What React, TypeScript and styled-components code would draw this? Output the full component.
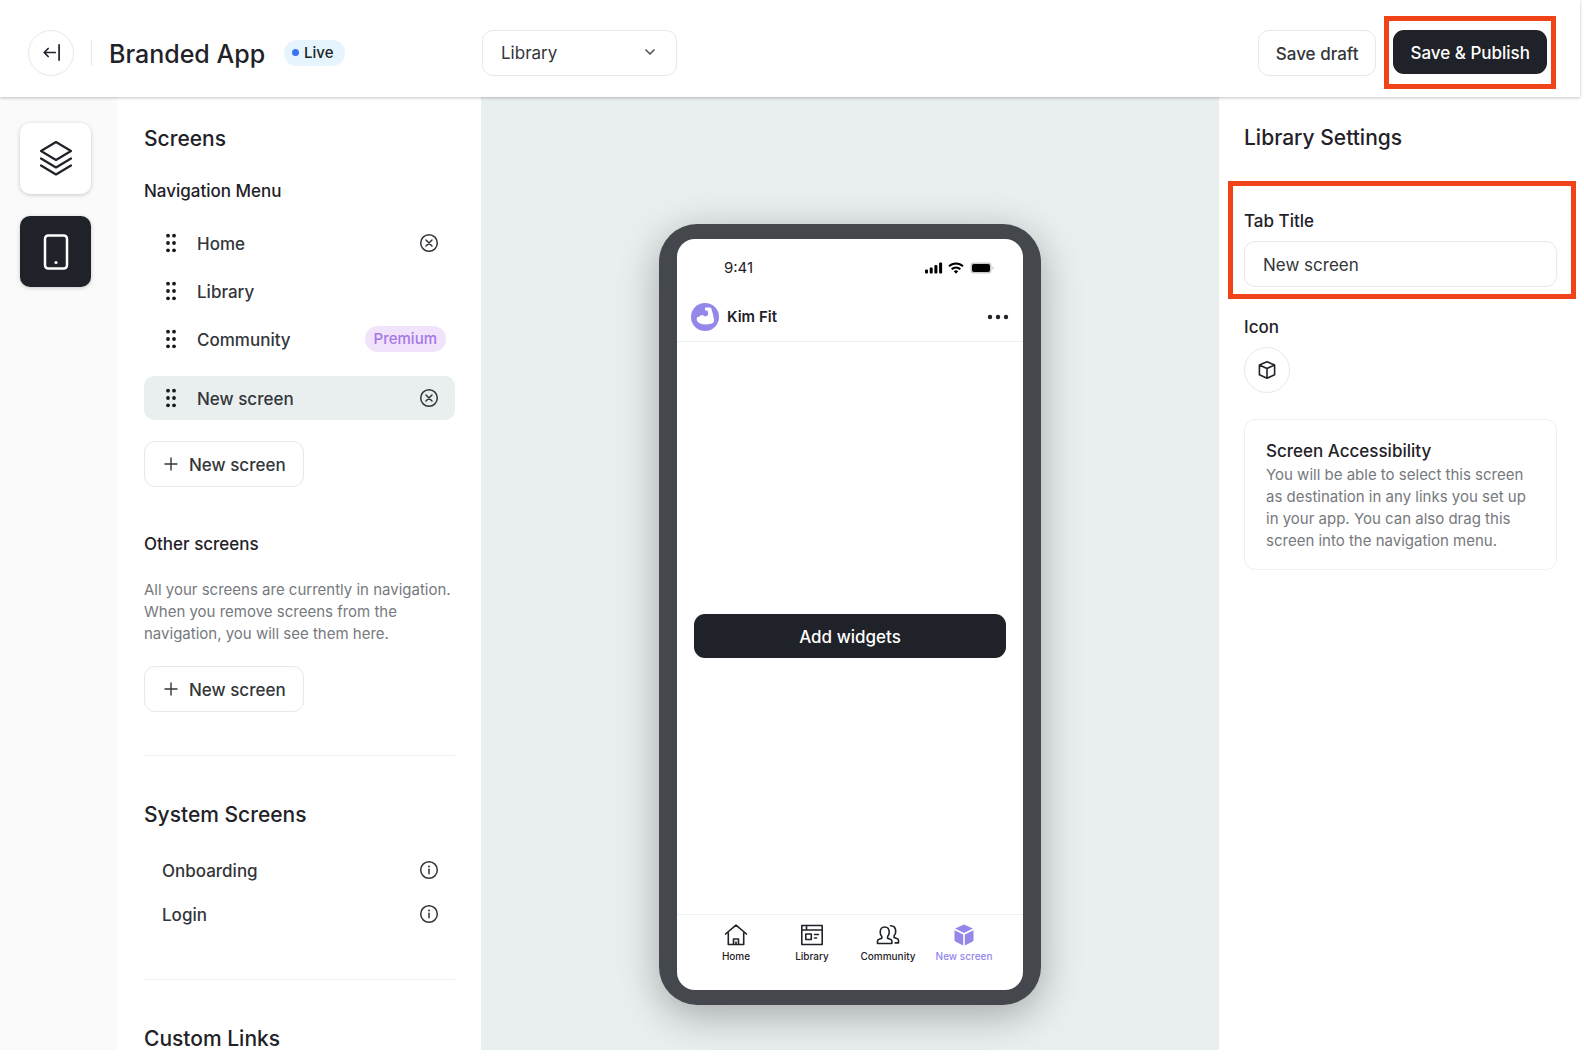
import React from "react";
import styled, { createGlobalStyle } from "styled-components";

const color = {
  ink: "#1f2228",
  text: "#33363a",
  muted: "#76797d",
  line: "#e6e8ea",
  canvas: "#e9eeef",
  dark: "#1f2228",
  purple: "#9388ea",
  alert: "#f0431a",
};

const GlobalStyle = createGlobalStyle`
  *, *::before, *::after { box-sizing: border-box; }
  body {
    margin: 0;
    background: #fff;
    color: ${color.ink};
    font-family: Inter, "Liberation Sans", sans-serif;
    font-size: 17px;
    line-height: 24px;
  }
  button, input, select { font: inherit; color: inherit; }
  button { cursor: pointer; }
  h1, h2, h3, p, ul { margin: 0; padding: 0; }
  svg { display: block; flex: none; }
`;

const Page = styled.div`
  display: grid;
  grid-template-rows: auto minmax(0, 1fr);
  height: 100vh;
  padding: 0 4px 8px 0;
`;

const Header = styled.header`
  z-index: 1;
  display: grid;
  grid-template-columns: 482px 1fr auto;
  align-items: center;
  padding: 16px 24px 8px 0;
  background: #fff;
  box-shadow: 0 1px 3px rgba(0, 0, 0, 0.24);
`;

const Brand = styled.div`
  display: flex;
  align-items: center;
  padding-left: 28px;
`;

const RoundButton = styled.button`
  display: grid;
  place-items: center;
  width: 46px;
  height: 46px;
  padding: 0;
  border: 1px solid ${color.line};
  border-radius: 50%;
  background: #fff;
`;

const VerticalRule = styled.span`
  width: 1px;
  height: 26px;
  margin: 0 17px;
  background: ${color.line};
`;

const Title = styled.h1`
  padding-top: 2px;
  font-size: 25px;
  line-height: 32px;
  font-weight: 500;
`;

const LiveBadge = styled.span`
  display: flex;
  align-items: center;
  gap: 5px;
  height: 26px;
  margin-left: 19px;
  padding: 0 11px 0 8px;
  border-radius: 13px;
  background: #e5f4fd;
  font-size: 15px;
  font-weight: 500;

  &::before {
    content: "";
    width: 7px;
    height: 7px;
    border-radius: 50%;
    background: #3b74f1;
  }
`;

const SelectBox = styled.div`
  position: relative;
  width: 195px;

  svg {
    position: absolute;
    top: 15px;
    right: 20px;
    color: #55585d;
    pointer-events: none;
  }
`;

const Select = styled.select`
  appearance: none;
  width: 100%;
  height: 46px;
  padding: 0 40px 0 18px;
  border: 1px solid ${color.line};
  border-radius: 11px;
  background: #fff;
  color: ${color.text};
`;

const HeaderActions = styled.div`
  display: flex;
  align-items: center;
  gap: 8px;
`;

const Button = styled.button<{ $solid?: boolean }>`
  display: inline-flex;
  align-items: center;
  justify-content: center;
  gap: 11px;
  height: ${(p) => (p.$solid ? 44 : 46)}px;
  padding: 2px 17px 0;
  border: ${(p) => (p.$solid ? "0" : `1px solid ${color.line}`)};
  border-radius: 11px;
  background: ${(p) => (p.$solid ? color.dark : "#fff")};
  color: ${(p) => (p.$solid ? "#fff" : color.text)};
  font-weight: 500;
  white-space: nowrap;
`;

const PublishFrame = styled.div`
  padding: 9px 4px 10px;
  border: 5px solid ${color.alert};

  button { display: flex; }
`;

const Workspace = styled.div`
  display: grid;
  grid-template-columns: 117px 364px minmax(0, 1fr) 361px;
  overflow: hidden;
`;

const Rail = styled.nav`
  display: flex;
  flex-direction: column;
  gap: 22px;
  padding: 26px 20px;
  background: #fafafa;
`;

const RailButton = styled.button<{ $active?: boolean }>`
  display: grid;
  place-items: center;
  width: 71px;
  height: 71px;
  padding: 0;
  border: 0;
  border-radius: 10px;
  background: ${(p) => (p.$active ? color.dark : "#fff")};
  color: ${(p) => (p.$active ? "#fff" : color.ink)};
  box-shadow: 0 1px 4px rgba(0, 0, 0, 0.2);
`;

const Sidebar = styled.aside`
  padding: 0 26px 0 27px;
  overflow: hidden;
`;

const Section = styled.section`
  padding: 28px 0 43px;
  border-bottom: 1px solid #eff0f1;

  & + & { padding-top: 45px; }
  &:last-child { border-bottom: 0; }
`;

const Heading = styled.h2`
  font-size: 21px;
  line-height: 28px;
  font-weight: 500;
`;

const Subheading = styled.h3`
  font-size: 17px;
  line-height: 24px;
  font-weight: 500;
`;

const NavHeading = styled(Subheading)`
  margin: 26px 0 18px;
`;

const OtherHeading = styled(Subheading)`
  margin: 45px 0 23px;
`;

const List = styled.ul<{ $gap: number }>`
  display: flex;
  flex-direction: column;
  gap: ${(p) => p.$gap}px;
  list-style: none;
`;

const Row = styled.li<{ $selected?: boolean }>`
  display: flex;
  align-items: center;
  height: 44px;
  margin-top: ${(p) => (p.$selected ? 11 : 0)}px;
  padding: 0 9px 0 18px;
  border-radius: 10px;
  background: ${(p) => (p.$selected ? color.canvas : "transparent")};
  color: ${color.text};
  font-weight: 500;
`;

const DragHandle = styled.span`
  margin: 0 20px 0 3px;
  cursor: grab;
`;

const RowLabel = styled.span`
  flex: 1;
  padding-top: 1px;
`;

const IconButton = styled.button`
  display: grid;
  place-items: center;
  width: 34px;
  height: 34px;
  padding: 0;
  border: 0;
  background: none;
`;

const PremiumBadge = styled.span`
  padding: 0 9px;
  border-radius: 13px;
  background: #f0e3fb;
  color: #a577e6;
  font-size: 15px;
  line-height: 26px;
`;

const AddScreen = styled(Button)`
  display: flex;
  margin-top: 21px;
  padding: 2px 17px 0 19px;

  svg { margin-bottom: 2px; }
`;

const SystemList = styled(List)`
  margin-top: 19px;
`;

const Help = styled.p`
  color: ${color.muted};
  font-size: 15px;
  line-height: 22px;
`;

const Canvas = styled.main`
  display: flex;
  flex-direction: column;
  align-items: center;
  justify-content: flex-end;
  padding-bottom: 45px;
  background: ${color.canvas};
`;

const Phone = styled.div`
  display: flex;
  flex-direction: column;
  width: 382px;
  height: 781px;
  padding: 15px 18px;
  border-radius: 38px;
  background: #44474c;
  box-shadow: 0 10px 40px rgba(0, 0, 0, 0.3);
`;

const Screen = styled.div`
  display: flex;
  flex: 1;
  flex-direction: column;
  border-radius: 18px;
  background: #fff;
`;

const StatusBar = styled.div`
  display: flex;
  align-items: center;
  justify-content: space-between;
  height: 57px;
  padding: 0 28px 0 47px;
  font-size: 15px;
`;

const AppBar = styled.div`
  display: flex;
  align-items: center;
  height: 46px;
  padding: 0 12px 4px 14px;
  border-bottom: 1px solid #eceeef;
  font-size: 15px;
  font-weight: 600;
`;

const AppName = styled.span`
  flex: 1;
  padding-left: 8px;
`;

const MoreButton = styled(IconButton)`
  width: 26px;
`;

const ScreenBody = styled.div`
  display: flex;
  flex: 1;
  align-items: center;
  padding: 15px 17px 0;

  button { flex: 1; }
`;

const TabBar = styled.nav`
  display: grid;
  grid-template-columns: repeat(4, 1fr);
  height: 76px;
  padding: 9px 21px 0;
  border-top: 1px solid #eff0f1;
`;

const Tab = styled.button<{ $active?: boolean }>`
  display: flex;
  flex-direction: column;
  align-items: center;
  gap: 3px;
  padding: 0;
  border: 0;
  background: none;
  color: ${(p) => (p.$active ? color.purple : color.ink)};
  font-size: 10px;
  line-height: 14px;
  font-weight: 500;
  white-space: nowrap;
`;

const Settings = styled.aside`
  padding: 27px 23px 0 25px;
`;

const TitleFrame = styled.div`
  display: flex;
  flex-direction: column;
  gap: 8px;
  margin: 29px -19px 0 -16px;
  padding: 23px 14px 7px 11px;
  border: 5px solid ${color.alert};
`;

const FieldLabel = styled.label`
  font-weight: 500;
`;

const TextInput = styled.input`
  width: 100%;
  height: 46px;
  padding: 2px 18px 0;
  border: 1px solid ${color.line};
  border-radius: 11px;
  background: #fff;
  color: ${color.text};
`;

const IconField = styled.div`
  display: flex;
  flex-direction: column;
  align-items: flex-start;
  gap: 8px;
  padding: 16px 0 26px;
`;

const Card = styled.section`
  padding: 19px 21px 17px;
  border: 1px solid #eff0f1;
  border-radius: 11px;

  p { margin-top: 1px; }
`;

const stroke = {
  fill: "none",
  stroke: "currentColor",
  strokeLinecap: "round" as const,
  strokeLinejoin: "round" as const,
};

const BackIcon = () => (
  <svg width="19" height="19" viewBox="0 0 20 20" {...stroke} strokeWidth="1.8">
    <path d="M18 2v16M14 10H2.5M6.500 5.800 2.300 10l4.200 4.200" />
  </svg>
);

const ChevronIcon = () => (
  <svg width="14" height="14" viewBox="0 0 14 14" {...stroke} strokeWidth="1.7">
    <path d="m3 5 4 4 4-4" />
  </svg>
);

const LayersIcon = () => (
  <svg width="36" height="38" viewBox="0 0 36 38" {...stroke} strokeWidth="2.2">
    <path d="M18 2 33 11 18 20 3 11zM3 18.500l15 9 15-9M3 25.500l15 9 15-9" />
  </svg>
);

const PhoneIcon = () => (
  <svg width="26" height="38" viewBox="0 0 26 38" {...stroke} strokeWidth="2.5">
    <rect x="2" y="2.500" width="22" height="33" rx="3.200" />
    <circle cx="13" cy="29.500" r="1.600" fill="currentColor" stroke="none" />
  </svg>
);

const DragIcon = () => (
  <svg width="12" height="20" viewBox="0 0 12 20" fill="#17191d">
    {[2.7, 10, 17.3].map((y) => (
      <React.Fragment key={y}>
        <circle cx="3" cy={y} r="1.900" />
        <circle cx="9" cy={y} r="1.900" />
      </React.Fragment>
    ))}
  </svg>
);

const RemoveIcon = () => (
  <svg width="20" height="20" viewBox="0 0 20 20" {...stroke} strokeWidth="1.5">
    <circle cx="10" cy="10" r="8.300" />
    <path d="m7 7 6 6M13 7l-6 6" />
  </svg>
);

const InfoIcon = () => (
  <svg width="20" height="20" viewBox="0 0 20 20" {...stroke} strokeWidth="1.5">
    <circle cx="10" cy="10" r="8.300" />
    <path d="M10 9.300v4.500" />
    <circle cx="10" cy="6.500" r="1" fill="currentColor" stroke="none" />
  </svg>
);

const PlusIcon = () => (
  <svg width="14" height="14" viewBox="0 0 14 14" {...stroke} strokeWidth="1.4">
    <path d="M7 1v12M1 7h12" />
  </svg>
);

const CubeIcon = () => (
  <svg width="20" height="20" viewBox="0 0 20 20" {...stroke} strokeWidth="1.6">
    <path d="M10 1.800 17.600 5v9.800L10 18.300l-7.600-3.500V5zM2.400 5 10 8.500 17.600 5M10 8.500v9.800" />
  </svg>
);

const LogoIcon = () => (
  <svg width="28" height="28" viewBox="0 0 28 28">
    <circle cx="14" cy="14" r="14" fill={color.purple} />
    <path
      d="M14 5.600c0-.7.500-1.100 1.200-1.100h3.700c.7 0 1.200.4 1.400 1.100 1.100 3.400 2.200 7.600 2.700 11.400.2 1.800-.5 2.900-2.200 3.400-3.600 1.100-8 1.400-11 .4C7 19.900 5.500 18 5.700 15.600c.1-1.400 1.200-1.500 2.200-1.900 1.300-.6 2-1.700 3.500-1.600 1.100.1 1.500 1.300 2.600 1.300 1.200 0 2.200-.8 3-1.700.3-.4.300-.8.200-1.300l-.6-2.700-1.600-.2c-.7-.1-1-.5-1-1.100z"
      fill="#fff"
    />
  </svg>
);

const MoreIcon = () => (
  <svg width="22" height="6" viewBox="0 0 22 6" fill={color.ink}>
    <circle cx="3" cy="3" r="2.200" />
    <circle cx="11" cy="3" r="2.200" />
    <circle cx="19" cy="3" r="2.200" />
  </svg>
);

const StatusIcons = () => (
  <svg width="70" height="14" viewBox="0 0 70 14">
    <rect x="0" y="8.500" width="3" height="4" rx="1" />
    <rect x="4.700" y="6.500" width="3" height="6" rx="1" />
    <rect x="9.400" y="4" width="3" height="8.500" rx="1" />
    <rect x="14.100" y="1.500" width="3" height="11" rx="1" />
    <g fill="none" stroke="#000" strokeWidth="2">
      <path d="M24 5.300a10 10 0 0 1 14 0" />
      <path d="M26.700 8.300a6 6 0 0 1 8.600 0" />
    </g>
    <path d="m31 12.800-2.200-2.500a3.200 3.200 0 0 1 4.400 0z" />
    <rect x="45.500" y="1.500" width="21" height="11" rx="3" fill="#c9c9cb" />
    <rect x="47" y="3" width="18" height="8" rx="2" />
    <path d="M67.500 5v4c1.600-.6 1.600-3.400 0-4z" fill="#c9c9cb" />
  </svg>
);

const HomeTabIcon = () => (
  <svg width="24" height="22" viewBox="0 0 24 22" {...stroke} strokeWidth="1.600">
    <path d="M1.500 10 12 1.200 22.500 10M4.300 8.500v12h15.400v-12M9.500 20v-5h5v5M12 18v2" />
  </svg>
);

const LibraryTabIcon = () => (
  <svg width="24" height="22" viewBox="0 0 24 22" {...stroke} strokeWidth="1.600">
    <path d="M1.800 1.500h20.400v19H1.800zM1.800 6h20.400M6.500 1.500V6M5.800 10h5.500v5.500H5.800zM14.500 10.500h4M14.500 14h2" />
  </svg>
);

const CommunityTabIcon = () => (
  <svg width="24" height="22" viewBox="0 0 24 22" {...stroke} strokeWidth="1.600">
    <path d="M1.500 19.500v-2.200c0-1 .7-1.700 1.600-2l2.700-1v-1.800C4.700 11.500 4.200 10 4.200 8.200 4.200 5 6 3 8.700 3s4.500 2 4.500 5.200c0 1.800-.5 3.300-1.600 4.300v1.800l2.700 1c.9.3 1.600 1 1.600 2v2.200z" />
    <path d="M14.500 1.800c3 0 5.200 2 5.200 5.600 0 1.800-.5 3.300-1.600 4.300v1.900l2.700 1c.9.3 1.700 1 1.700 2v2.300h-3.300" />
  </svg>
);

const CubeTabIcon = () => (
  <svg width="22" height="22" viewBox="0 0 22 22" fill="currentColor">
    <path d="M11 .5 20 4.600 11 9 2 4.600zM1.500 6.200l8.700 4.200V21.500L2.600 17.700c-.7-.3-1.100-.9-1.100-1.600zM20.500 6.200v9.900c0 .7-.4 1.300-1.100 1.600l-7.600 3.800V10.400z" />
  </svg>
);

type ScreenItem = { name: string; removable?: boolean; premium?: boolean; selected?: boolean };

const screens: ScreenItem[] = [
  { name: "Home", removable: true },
  { name: "Library" },
  { name: "Community", premium: true },
  { name: "New screen", removable: true, selected: true },
];

const tabs = [
  { name: "Home", Icon: HomeTabIcon },
  { name: "Library", Icon: LibraryTabIcon },
  { name: "Community", Icon: CommunityTabIcon },
  { name: "New screen", Icon: CubeTabIcon, active: true },
];

export default function App() {
  const [tabTitle, setTabTitle] = React.useState("New screen");

  return (
    <>
      <GlobalStyle />
      <Page>
        <Header>
          <Brand>
            <RoundButton aria-label="Back">
              <BackIcon />
            </RoundButton>
            <VerticalRule />
            <Title>Branded App</Title>
            <LiveBadge>Live</LiveBadge>
          </Brand>
          <SelectBox>
            <Select aria-label="Screen" defaultValue="Library">
              {screens.map((s) => (
                <option key={s.name}>{s.name}</option>
              ))}
            </Select>
            <ChevronIcon />
          </SelectBox>
          <HeaderActions>
            <Button>Save draft</Button>
            <PublishFrame>
              <Button $solid>Save &amp; Publish</Button>
            </PublishFrame>
          </HeaderActions>
        </Header>

        <Workspace>
          <Rail aria-label="Editor">
            <RailButton aria-label="Layers">
              <LayersIcon />
            </RailButton>
            <RailButton aria-label="Screens" $active>
              <PhoneIcon />
            </RailButton>
          </Rail>

          <Sidebar>
            <Section>
              <Heading>Screens</Heading>
              <NavHeading>Navigation Menu</NavHeading>
              <List $gap={4}>
                {screens.map((s) => (
                  <Row key={s.name} $selected={s.selected}>
                    <DragHandle>
                      <DragIcon />
                    </DragHandle>
                    <RowLabel>{s.name}</RowLabel>
                    {s.premium && <PremiumBadge>Premium</PremiumBadge>}
                    {s.removable && (
                      <IconButton aria-label={`Remove ${s.name}`}>
                        <RemoveIcon />
                      </IconButton>
                    )}
                  </Row>
                ))}
              </List>
              <AddScreen>
                <PlusIcon />
                New screen
              </AddScreen>
              <OtherHeading>Other screens</OtherHeading>
              <Help>
                All your screens are currently in navigation. When you remove screens from the
                navigation, you will see them here.
              </Help>
              <AddScreen>
                <PlusIcon />
                New screen
              </AddScreen>
            </Section>
            <Section>
              <Heading>System Screens</Heading>
              <SystemList $gap={0}>
                {["Onboarding", "Login"].map((name) => (
                  <Row key={name}>
                    <RowLabel>{name}</RowLabel>
                    <IconButton aria-label={`About ${name}`}>
                      <InfoIcon />
                    </IconButton>
                  </Row>
                ))}
              </SystemList>
            </Section>
            <Section>
              <Heading>Custom Links</Heading>
            </Section>
          </Sidebar>

          <Canvas>
            <Phone>
              <Screen>
                <StatusBar>
                  <span>9:41</span>
                  <StatusIcons />
                </StatusBar>
                <AppBar>
                  <LogoIcon />
                  <AppName>Kim Fit</AppName>
                  <MoreButton aria-label="More">
                    <MoreIcon />
                  </MoreButton>
                </AppBar>
                <ScreenBody>
                  <Button $solid>Add widgets</Button>
                </ScreenBody>
                <TabBar aria-label="Preview">
                  {tabs.map(({ name, Icon, active }) => (
                    <Tab key={name} $active={active}>
                      <Icon />
                      {name}
                    </Tab>
                  ))}
                </TabBar>
              </Screen>
            </Phone>
          </Canvas>

          <Settings>
            <Heading>Library Settings</Heading>
            <TitleFrame>
              <FieldLabel htmlFor="tab-title">Tab Title</FieldLabel>
              <TextInput
                id="tab-title"
                value={tabTitle}
                onChange={(e) => setTabTitle(e.target.value)}
              />
            </TitleFrame>
            <IconField>
              <FieldLabel htmlFor="tab-icon">Icon</FieldLabel>
              <RoundButton id="tab-icon">
                <CubeIcon />
              </RoundButton>
            </IconField>
            <Card>
              <Subheading>Screen Accessibility</Subheading>
              <Help>
                You will be able to select this screen as destination in any links you set up in
                your app. You can also drag this screen into the navigation menu.
              </Help>
            </Card>
          </Settings>
        </Workspace>
      </Page>
    </>
  );
}
